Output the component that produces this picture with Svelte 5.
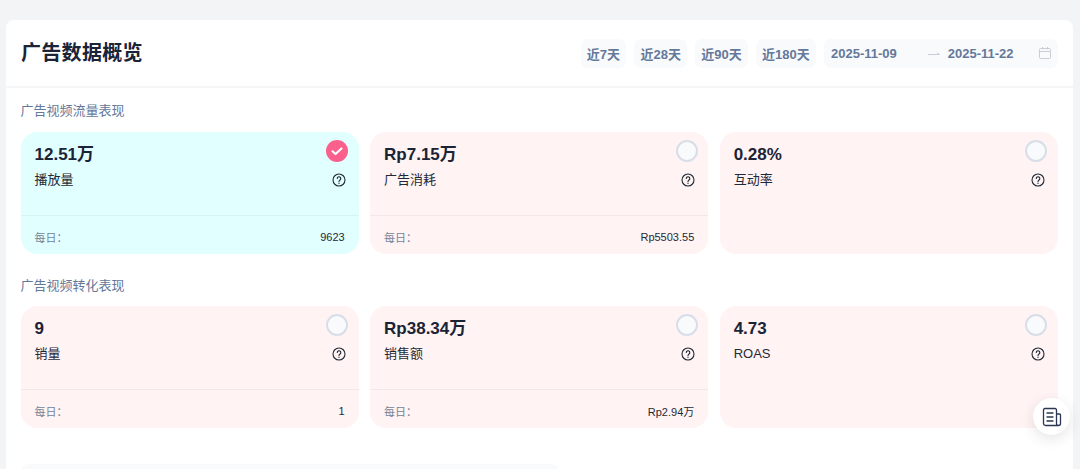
<script>
  const sections = [
    {
      title: '广告视频流量表现',
      cards: [
        { value: '12.51万', label: '播放量', daily: '9623', selected: true },
        { value: 'Rp7.15万', label: '广告消耗', daily: 'Rp5503.55' },
        { value: '0.28%', label: '互动率' }
      ]
    },
    {
      title: '广告视频转化表现',
      cards: [
        { value: '9', label: '销量', daily: '1' },
        { value: 'Rp38.34万', label: '销售额', daily: 'Rp2.94万' },
        { value: '4.73', label: 'ROAS' }
      ]
    }
  ];
  const ranges = ['近7天', '近28天', '近90天', '近180天'];
</script>

<div class="page">
  <main class="panel">
    <header class="head">
      <h1>广告数据概览</h1>
      <div class="tools">
        {#each ranges as r}
          <button class="range">{r}</button>
        {/each}
        <div class="dates">
          <span class="date">2025-11-09</span>
          <svg class="arrow" width="14" height="6" viewBox="0 0 14 6" fill="none" stroke="#c9ced6" stroke-width="1"><path d="M1 4.500h11.500M10 2.500l2.500 2"/></svg>
          <span class="date">2025-11-22</span>
          <svg class="cal" width="14" height="14" viewBox="0 0 14 14" fill="none" stroke="#c9ced6" stroke-width="1"><rect x="1.500" y="2.500" width="11" height="10" rx="1"/><path d="M1.500 5.500h11M4.500 1v2.500M9.500 1v2.500"/></svg>
        </div>
      </div>
    </header>

    <div class="body">
      {#each sections as s}
        <section>
          <h2>{s.title}</h2>
          <div class="grid">
            {#each s.cards as c}
              <article class="card" class:selected={c.selected}>
                <div class="top">
                  <div class="value">{c.value}</div>
                  <div class="label-row">
                    <span>{c.label}</span>
                    <svg width="14" height="14" viewBox="0 0 14 14" fill="none" stroke="#1f2937" stroke-width="1.100" stroke-linecap="round"><circle cx="7" cy="7" r="6"/><path d="M5.300 5.500a1.750 1.750 0 1 1 2.700 1.500c-.6.4-1 .7-1 1.400"/><path d="M7 10.200v.1" stroke-width="1.300"/></svg>
                  </div>
                  {#if c.selected}
                    <span class="check">
                      <svg width="14" height="14" viewBox="0 0 14 14" fill="none" stroke="#fff" stroke-width="2.200" stroke-linecap="round" stroke-linejoin="round"><path d="M2.500 7.300l3 2.700 6-5.500"/></svg>
                    </span>
                  {:else}
                    <span class="radio"></span>
                  {/if}
                </div>
                {#if c.daily}
                  <div class="foot">
                    <span class="daily">每日：</span>
                    <span class="num">{c.daily}</span>
                  </div>
                {/if}
              </article>
            {/each}
          </div>
        </section>
      {/each}
      <div class="ghost"></div>
    </div>
  </main>

  <button class="fab" aria-label="文档">
    <svg width="22" height="22" viewBox="0 0 22 22" fill="none" stroke="#2b3650" stroke-width="1.300" stroke-linecap="round" stroke-linejoin="round">
      <path d="M16 19.500H4.500A2 2 0 0 1 2.500 17.500V4A1.500 1.500 0 0 1 4 2.500h10A1.500 1.500 0 0 1 15.500 4v13.500a2 2 0 0 0 2 2 2 2 0 0 0 2-2V9a1 1 0 0 0-1-1h-3"/>
      <path d="M6 7h6M6 11h6M6 15h6"/>
    </svg>
  </button>
</div>

<style>
  :global(body) {
    margin: 0;
    background: #f3f4f6;
    overflow: hidden;
  }
  .page {
    position: relative;
    height: 469px;
    padding: 20px 7px 0 6px;
    box-sizing: border-box;
    overflow: hidden;
    font-family: "Liberation Sans", "Noto Sans CJK SC", sans-serif;
    color: #1b2336;
  }
  .panel {
    background: #fff;
    border-radius: 8px 8px 0 0;
    height: 460px;
  }
  .head {
    height: 66px;
    border-bottom: 2px solid #f5f6f8;
    display: flex;
    align-items: center;
    justify-content: space-between;
    padding: 0 15px;
  }
  h1 {
    margin: 0;
    font-size: 20px;
    font-weight: 700;
    line-height: 28px;
    letter-spacing: 0.3px;
    color: #1b2336;
  }
  .tools {
    display: flex;
    gap: 8px;
    align-items: center;
  }
  .range {
    height: 29px;
    padding: 0 6.200px;
    border: 0;
    border-radius: 7px;
    background: #f9fafb;
    color: #64789a;
    font: 700 13px "Liberation Sans", "Noto Sans CJK SC", sans-serif;
  }
  .dates {
    width: 234px;
    height: 29px;
    box-sizing: border-box;
    padding: 0 6px 0 7px;
    border-radius: 7px;
    background: #f9fafb;
    display: flex;
    align-items: center;
    color: #64789a;
    font-size: 13px;
    font-weight: 700;
  }
  .arrow { margin: 0 7px 0 30px; }
  .cal { margin-left: auto; }
  .body { padding: 0 14.500px; }
  h2 {
    margin: 0;
    height: 44px;
    padding-top: 13px;
    box-sizing: border-box;
    font-size: 13px;
    line-height: 20px;
    font-weight: 400;
    color: #64789a;
  }
  section + section h2 { height: 52px; padding-top: 21.500px; }
  .grid {
    display: grid;
    grid-template-columns: repeat(3, 338.200px);
    gap: 11.400px;
  }
  .card {
    position: relative;
    height: 122px;
    border-radius: 16px;
    background: #fff3f3;
    box-sizing: border-box;
  }
  .card.selected { background: #e2ffff; }
  .top {
    height: 83px;
    padding: 12px 14px 0;
    box-sizing: border-box;
  }
  .value {
    font-size: 17px;
    font-weight: 700;
    line-height: 22px;
  }
  .label-row {
    margin-top: 4px;
    display: flex;
    justify-content: space-between;
    align-items: center;
    font-size: 13px;
    line-height: 20px;
    color: #1f2937;
  }
  .label-row svg { margin-right: -1px; }
  .radio, .check {
    position: absolute;
    top: 7.500px;
    right: 10.500px;
    width: 22px;
    height: 22px;
    border-radius: 50%;
    box-sizing: border-box;
  }
  .radio {
    background: #f9fafb;
    border: 2px solid #d8dee8;
  }
  .check {
    background: #fb5f8c;
    display: flex;
    align-items: center;
    justify-content: center;
  }
  .foot {
    height: 39px;
    border-top: 1px solid rgba(30, 50, 80, 0.06);
    display: flex;
    justify-content: space-between;
    align-items: center;
    padding: 3px 14px 0;
    box-sizing: border-box;
    font-size: 11px;
  }
  .daily { color: #738499; }
  .num { color: #1f2937; }
  .ghost {
    margin-top: 36px;
    width: 538px;
    height: 20px;
    background: #f9fafb;
    border-radius: 8px;
  }
  .fab {
    position: absolute;
    left: 1033px;
    top: 398px;
    width: 37px;
    height: 37px;
    padding: 0;
    border: 0;
    border-radius: 50%;
    background: #fff;
    box-shadow: 0 4px 14px rgba(30, 40, 60, 0.12);
    display: flex;
    align-items: center;
    justify-content: center;
  }
</style>
